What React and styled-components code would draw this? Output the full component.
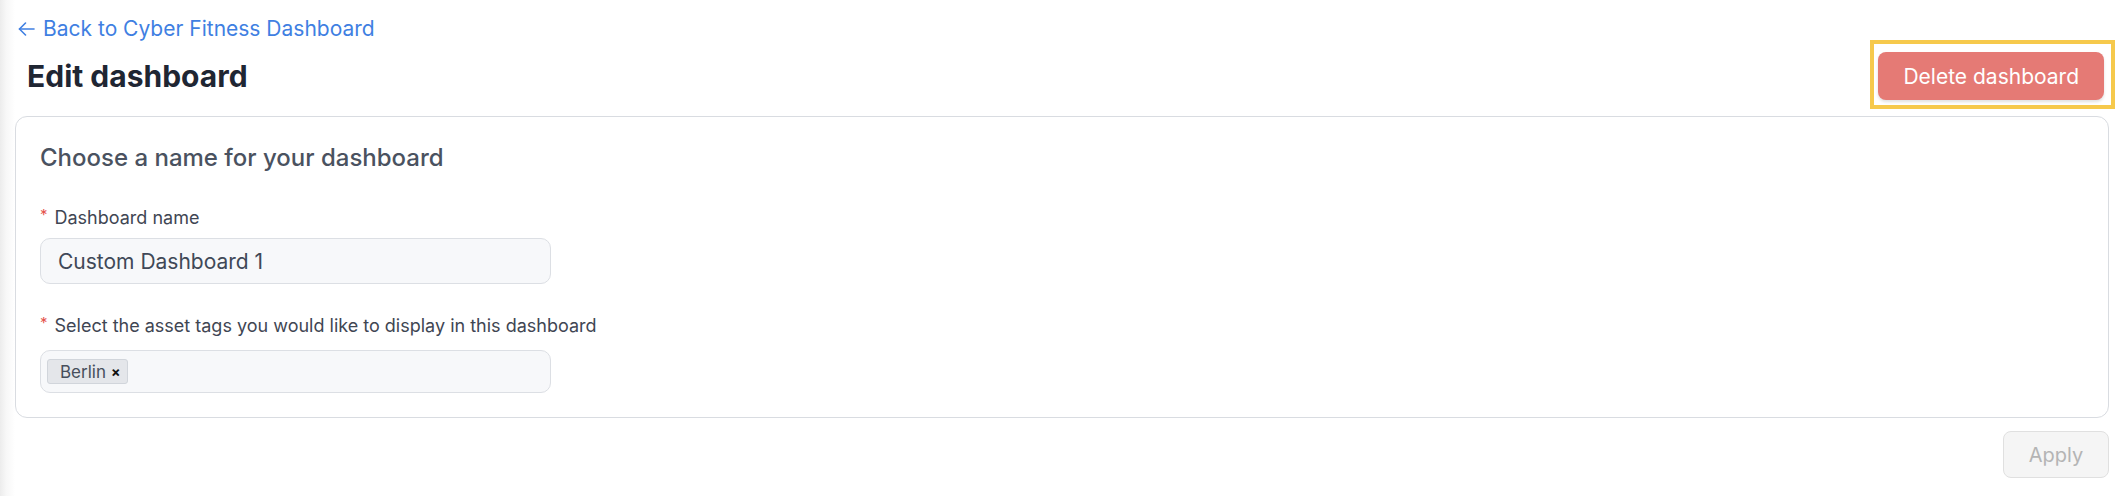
import React from "react";
import styled, { createGlobalStyle } from "styled-components";

const GlobalStyle = createGlobalStyle`
  html, body {
    margin: 0;
    padding: 0;
  }
  body {
    font-family: Inter, "Noto Sans", "Liberation Sans", sans-serif;
    background: linear-gradient(to right, #ececec 0px, #f7f7f7 6px, #ffffff 15px);
    min-height: 496px;
    -webkit-font-smoothing: antialiased;
  }
  * { box-sizing: border-box; }
`;

const Page = styled.div`
  padding: 15px 15px 0 15px;
  height: 496px;
`;

const BackLink = styled.a`
  display: inline-flex;
  align-items: center;
  gap: 8px;
  padding-left: 3px;
  color: #3f7fe2;
  font-size: 21px;
  line-height: 28px;
  text-decoration: none;
  cursor: pointer;
`;

const HeaderRow = styled.div`
  display: flex;
  align-items: center;
  justify-content: space-between;
  margin-top: 9px;
  padding-left: 12px;
  padding-right: 5px;
`;

const Title = styled.h1`
  margin: 0;
  font-size: 30px;
  line-height: 36px;
  font-weight: 700;
  color: #1f2633;
`;

const Highlight = styled.div`
  position: relative;
  display: flex;
  &::after {
    content: "";
    position: absolute;
    left: -8px;
    top: -12px;
    right: -11px;
    bottom: -9px;
    border: 4px solid #f6c94c;
    pointer-events: none;
  }
`;

const DangerButton = styled.button`
  height: 48px;
  padding: 0 25px;
  border: none;
  border-radius: 8px;
  background: #e57a75;
  color: #ffffff;
  font-family: inherit;
  font-size: 21px;
  box-shadow: 0 2px 3px rgba(0, 0, 0, 0.12);
  cursor: pointer;
`;

const Card = styled.section`
  margin-top: 16px;
  border: 1px solid #d9dce1;
  border-radius: 12px;
  padding: 25px 24px 24px;
  background: #ffffff;
`;

const CardHeading = styled.h2`
  margin: 0;
  font-size: 24px;
  line-height: 32px;
  font-weight: 500;
  color: #4a5260;
`;

const Field = styled.div`
  margin-top: ${(p) => p.$gap}px;
  display: flex;
  flex-direction: column;
  align-items: flex-start;
`;

const Label = styled.label`
  display: flex;
  align-items: flex-start;
  font-size: 18px;
  line-height: 24px;
  color: #3f4653;
`;

const Required = styled.span`
  color: #e5534b;
  font-size: 15px;
  line-height: 18px;
  margin-right: 7px;
`;

const TextInput = styled.input`
  margin-top: 8px;
  width: 511px;
  height: 46px;
  padding: 0 17px;
  background: #f7f8fa;
  border: 1px solid #dcdfe4;
  border-radius: 10px;
  font-family: inherit;
  font-size: 21px;
  color: #404857;
  outline: none;
`;

const TagBox = styled.div`
  margin-top: 12px;
  width: 511px;
  height: 43px;
  padding: 8px 6px;
  display: flex;
  align-items: flex-start;
  gap: 6px;
  background: #f7f8fa;
  border: 1px solid #dcdfe4;
  border-radius: 10px;
`;

const Tag = styled.span`
  display: inline-flex;
  align-items: center;
  gap: 5px;
  height: 25px;
  padding: 0 6px 0 12px;
  background: #e4e6ea;
  border: 1px solid #d1d5db;
  border-radius: 3px;
  font-size: 17px;
  color: #474f5c;
`;

const TagRemove = styled.span`
  font-size: 14px;
  font-weight: 700;
  color: #111111;
  line-height: 1;
`;

const Footer = styled.div`
  display: flex;
  justify-content: flex-end;
  margin-top: 13px;
`;

const ApplyButton = styled.button`
  width: 106px;
  height: 47px;
  border: 1px solid #e0e0e0;
  border-radius: 8px;
  background: #f5f5f5;
  color: #b4b4b4;
  font-family: inherit;
  font-size: 20px;
  cursor: not-allowed;
`;

const ArrowLeft = () => (
  <svg width="17" height="14" viewBox="0 0 17 14" fill="none" stroke="currentColor" strokeWidth="1.6" strokeLinecap="round" strokeLinejoin="round">
    <path d="M16 7H1.5" />
    <path d="M7.5 1L1.5 7L7.5 13" />
  </svg>
);

export default function App() {
  return (
    <>
      <GlobalStyle />
      <Page>
        <BackLink>
          <ArrowLeft />
          Back to Cyber Fitness Dashboard
        </BackLink>
        <HeaderRow>
          <Title>Edit dashboard</Title>
          <Highlight>
            <DangerButton>Delete dashboard</DangerButton>
          </Highlight>
        </HeaderRow>
        <Card>
          <CardHeading>Choose a name for your dashboard</CardHeading>
          <Field $gap={32}>
            <Label>
              <Required>*</Required>
              Dashboard name
            </Label>
            <TextInput defaultValue="Custom Dashboard 1" readOnly />
          </Field>
          <Field $gap={30}>
            <Label>
              <Required>*</Required>
              Select the asset tags you would like to display in this dashboard
            </Label>
            <TagBox>
              <Tag>
                Berlin
                <TagRemove>×</TagRemove>
              </Tag>
            </TagBox>
          </Field>
        </Card>
        <Footer>
          <ApplyButton disabled>Apply</ApplyButton>
        </Footer>
      </Page>
    </>
  );
}
